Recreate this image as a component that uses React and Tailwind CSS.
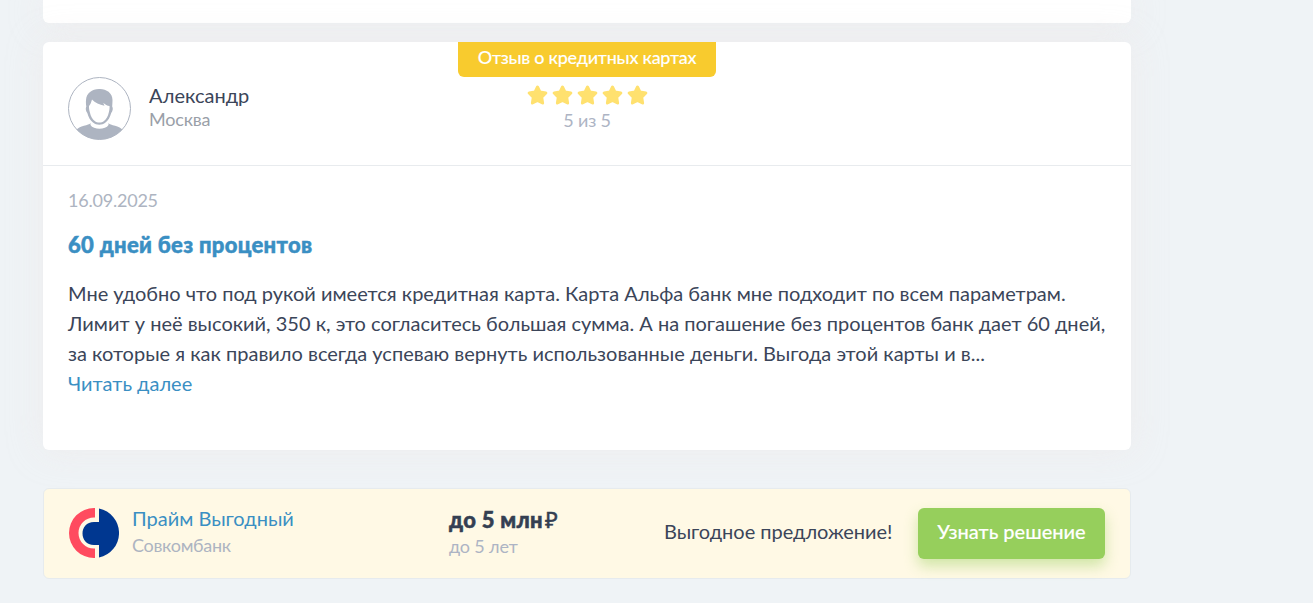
import React from 'react'

const rating = 5

const review = {
  author: 'Александр',
  city: 'Москва',
  tag: 'Отзыв о кредитных картах',
  date: '16.09.2025',
  title: '60 дней без процентов',
  lines: [
    'Мне удобно что под рукой имеется кредитная карта. Карта Альфа банк мне подходит по всем параметрам.',
    'Лимит у неё высокий, 350 к, это согласитесь большая сумма. А на погашение без процентов банк дает 60 дней,',
    'за которые я как правило всегда успеваю вернуть использованные деньги. Выгода этой карты и в...',
  ],
}

function Avatar() {
  return (
    <svg className="block h-[63px] w-[63px] shrink-0" viewBox="0 0 63 63" fill="none">
      <defs>
        <clipPath id="avatar-clip">
          <circle cx="31.5" cy="31.5" r="31" />
        </clipPath>
      </defs>
      <g clipPath="url(#avatar-clip)">
        <path
          fill="#adb4c1"
          d="M22.500 46C21 49 11.500 47.500 7.500 54V63h48V54C51.500 47.500 42 49 40.500 46V48C37.500 53 25.500 53 22.500 48z"
        />
        <path
          fill="#adb4c1"
          d="M31 12c6.500-.5 13.500 3.500 13.500 11 0 2.500-.2 5-.3 6.500 1.200 1.800.5 5-1 6.500-1.200 4.500-3 7.500-5.700 9.500-3.500 3-9 3-12.500 0-2.700-2-4.500-5-5.700-9.500-1.500-1.500-2-4.700-1-6.500-.3-2-.5-4.500-.3-6.500.5-7 6-11 13-11z"
        />
        <path
          fill="#fff"
          d="M24 22.500c3 3.200 7.500 5.200 12.500 6.200l-1.300-3c2 2 4 3 6.300 3.300.2 2 0 4-.7 6.500-.8 4-2.500 6.500-4.800 8.500-2.500 2-6.800 2-9.300 0-2.300-2-4-4.500-4.800-8.500-.7-2.500-1-4.500-.9-6.500 1.400-1.500 2.300-4 3-6.500z"
        />
      </g>
      <circle cx="31.5" cy="31.5" r="31" stroke="#adb4c1" />
    </svg>
  )
}

function Star() {
  return (
    <svg className="block h-5 w-[21px]" viewBox="0 0 21 20" fill="#ffe16f">
      <path
        stroke="#ffe16f"
        strokeWidth="3"
        strokeLinejoin="round"
        d="M10.500 2l2.500 5.100 5.800.9-4.100 4.200.9 5.800-5.100-2.600L5.400 18l.9-5.800L2.200 8 8 7.100z"
      />
    </svg>
  )
}

function BankLogo() {
  return (
    <svg className="block h-[50px] w-[50px] shrink-0" viewBox="0 0 50 50">
      <path fill="#ff4b5f" d="M26 0h-1a25 25 0 0 0 0 50h1V40.500h-1a15.500 15.500 0 0 1 0-31h1z" />
      <path fill="#003790" d="M30 .5a25 25 0 0 1 0 49V37h-5C17.500 37 13.500 31.500 13.500 25.500S17.500 14 25 14h5z" />
    </svg>
  )
}

function ReviewCard() {
  return (
    <article className="mt-[19px] h-[408px] rounded-md bg-white shadow-[0_0_35px_rgba(238,234,234,0.7)]">
      <header className="grid h-[124px] grid-cols-[415px_258px_1fr] border-b border-[#e8ebee]">
        <div className="flex items-start pl-[25px] pt-[35px]">
          <Avatar />
          <div className="ml-[18px] pt-[6px]">
            <div className="text-[20px] leading-6 text-[#3b4559]">{review.author}</div>
            <div className="mt-px text-[18px] leading-[22px] tracking-[-0.2px] text-[#9a9fa8]">{review.city}</div>
          </div>
        </div>
        <div className="flex flex-col items-center">
          <div className="h-[35px] w-full whitespace-nowrap rounded-b-md bg-[#f8cb2e] text-center text-[18px] font-medium leading-[31px] tracking-[-0.27px] text-white [-webkit-text-stroke:0.1px_white]">
            {review.tag}
          </div>
          <div className="mt-[8px] flex gap-1">
            {Array.from({ length: rating }, (_, i) => (
              <Star key={i} />
            ))}
          </div>
          <div className="mt-1 text-[18px] leading-[22px] tracking-[-0.2px] text-[#adb4c4]">{rating} из 5</div>
        </div>
      </header>

      <div className="px-[25px] pt-[23px]">
        <div className="text-[18px] leading-[22px] tracking-[-0.22px] text-[#adb4c1]">{review.date}</div>
        <h3 className="mt-[19px] text-[22px] font-black leading-[30px] tracking-[0.3px] text-[#3a8fc3] [-webkit-text-stroke:0.5px_#3a8fc3]">
          {review.title}
        </h3>
        <p className="mt-[18px] whitespace-nowrap text-[20px] leading-[30px] text-[#3b4559]">
          {review.lines.map((line) => (
            <span key={line} className="block">{line}</span>
          ))}
        </p>
        <a href="#" className="block text-[20px] leading-[30px] text-[#3a8fc3]">Читать далее</a>
      </div>
    </article>
  )
}

function Offer() {
  return (
    <section className="mt-[38px] flex h-[91px] items-start rounded-md border border-[#e6ebee] bg-[#fff9e5] px-[25px] pt-[19px]">
      <BankLogo />
      <div className="-mt-[2px] ml-[13px] w-[317px]">
        <a href="#" className="block text-[20px] leading-6 text-[#3a8fc3]">Прайм Выгодный</a>
        <div className="mt-[4px] text-[18px] leading-[22px] tracking-[-0.3px] text-[#adb4c1]">Совкомбанк</div>
      </div>
      <div className="-mt-[2px] w-[215px]">
        <div className="flex whitespace-nowrap text-[22px] leading-[27px] text-[#343f52]">
          <b className="font-black tracking-[0.3px] [-webkit-text-stroke:0.5px_#343f52]">до 5 млн</b>
          <span className="ml-[2px] text-[22px] [-webkit-text-stroke:0.5px_#343f52]">₽</span>
        </div>
        <div className="mt-[2px] text-[18px] leading-[22px] tracking-[-0.15px] text-[#adb4c4]">до 5 лет</div>
      </div>
      <div className="mt-[11px] whitespace-nowrap text-[20px] leading-6 tracking-[-0.03px] text-[#3b4559]">
        Выгодное предложение!
      </div>
      <button className="ml-auto h-[51px] w-[187px] whitespace-nowrap rounded-md bg-[#96cf5c] pb-[5px] text-[20px] font-medium text-white shadow-[0_7px_14px_rgba(150,207,92,0.45)] [-webkit-text-stroke:0.15px_white]">
        Узнать решение
      </button>
    </section>
  )
}

export default function App() {
  return (
    <div className="h-[603px] overflow-hidden bg-[#eff3f6] font-['Lato','Noto_Sans',sans-serif]">
      <main className="ml-[43px] w-[1088px]">
        <div className="h-[23px] rounded-b-md bg-white shadow-[0_0_35px_rgba(238,234,234,0.7)]" />
        <ReviewCard />
        <Offer />
      </main>
    </div>
  )
}
